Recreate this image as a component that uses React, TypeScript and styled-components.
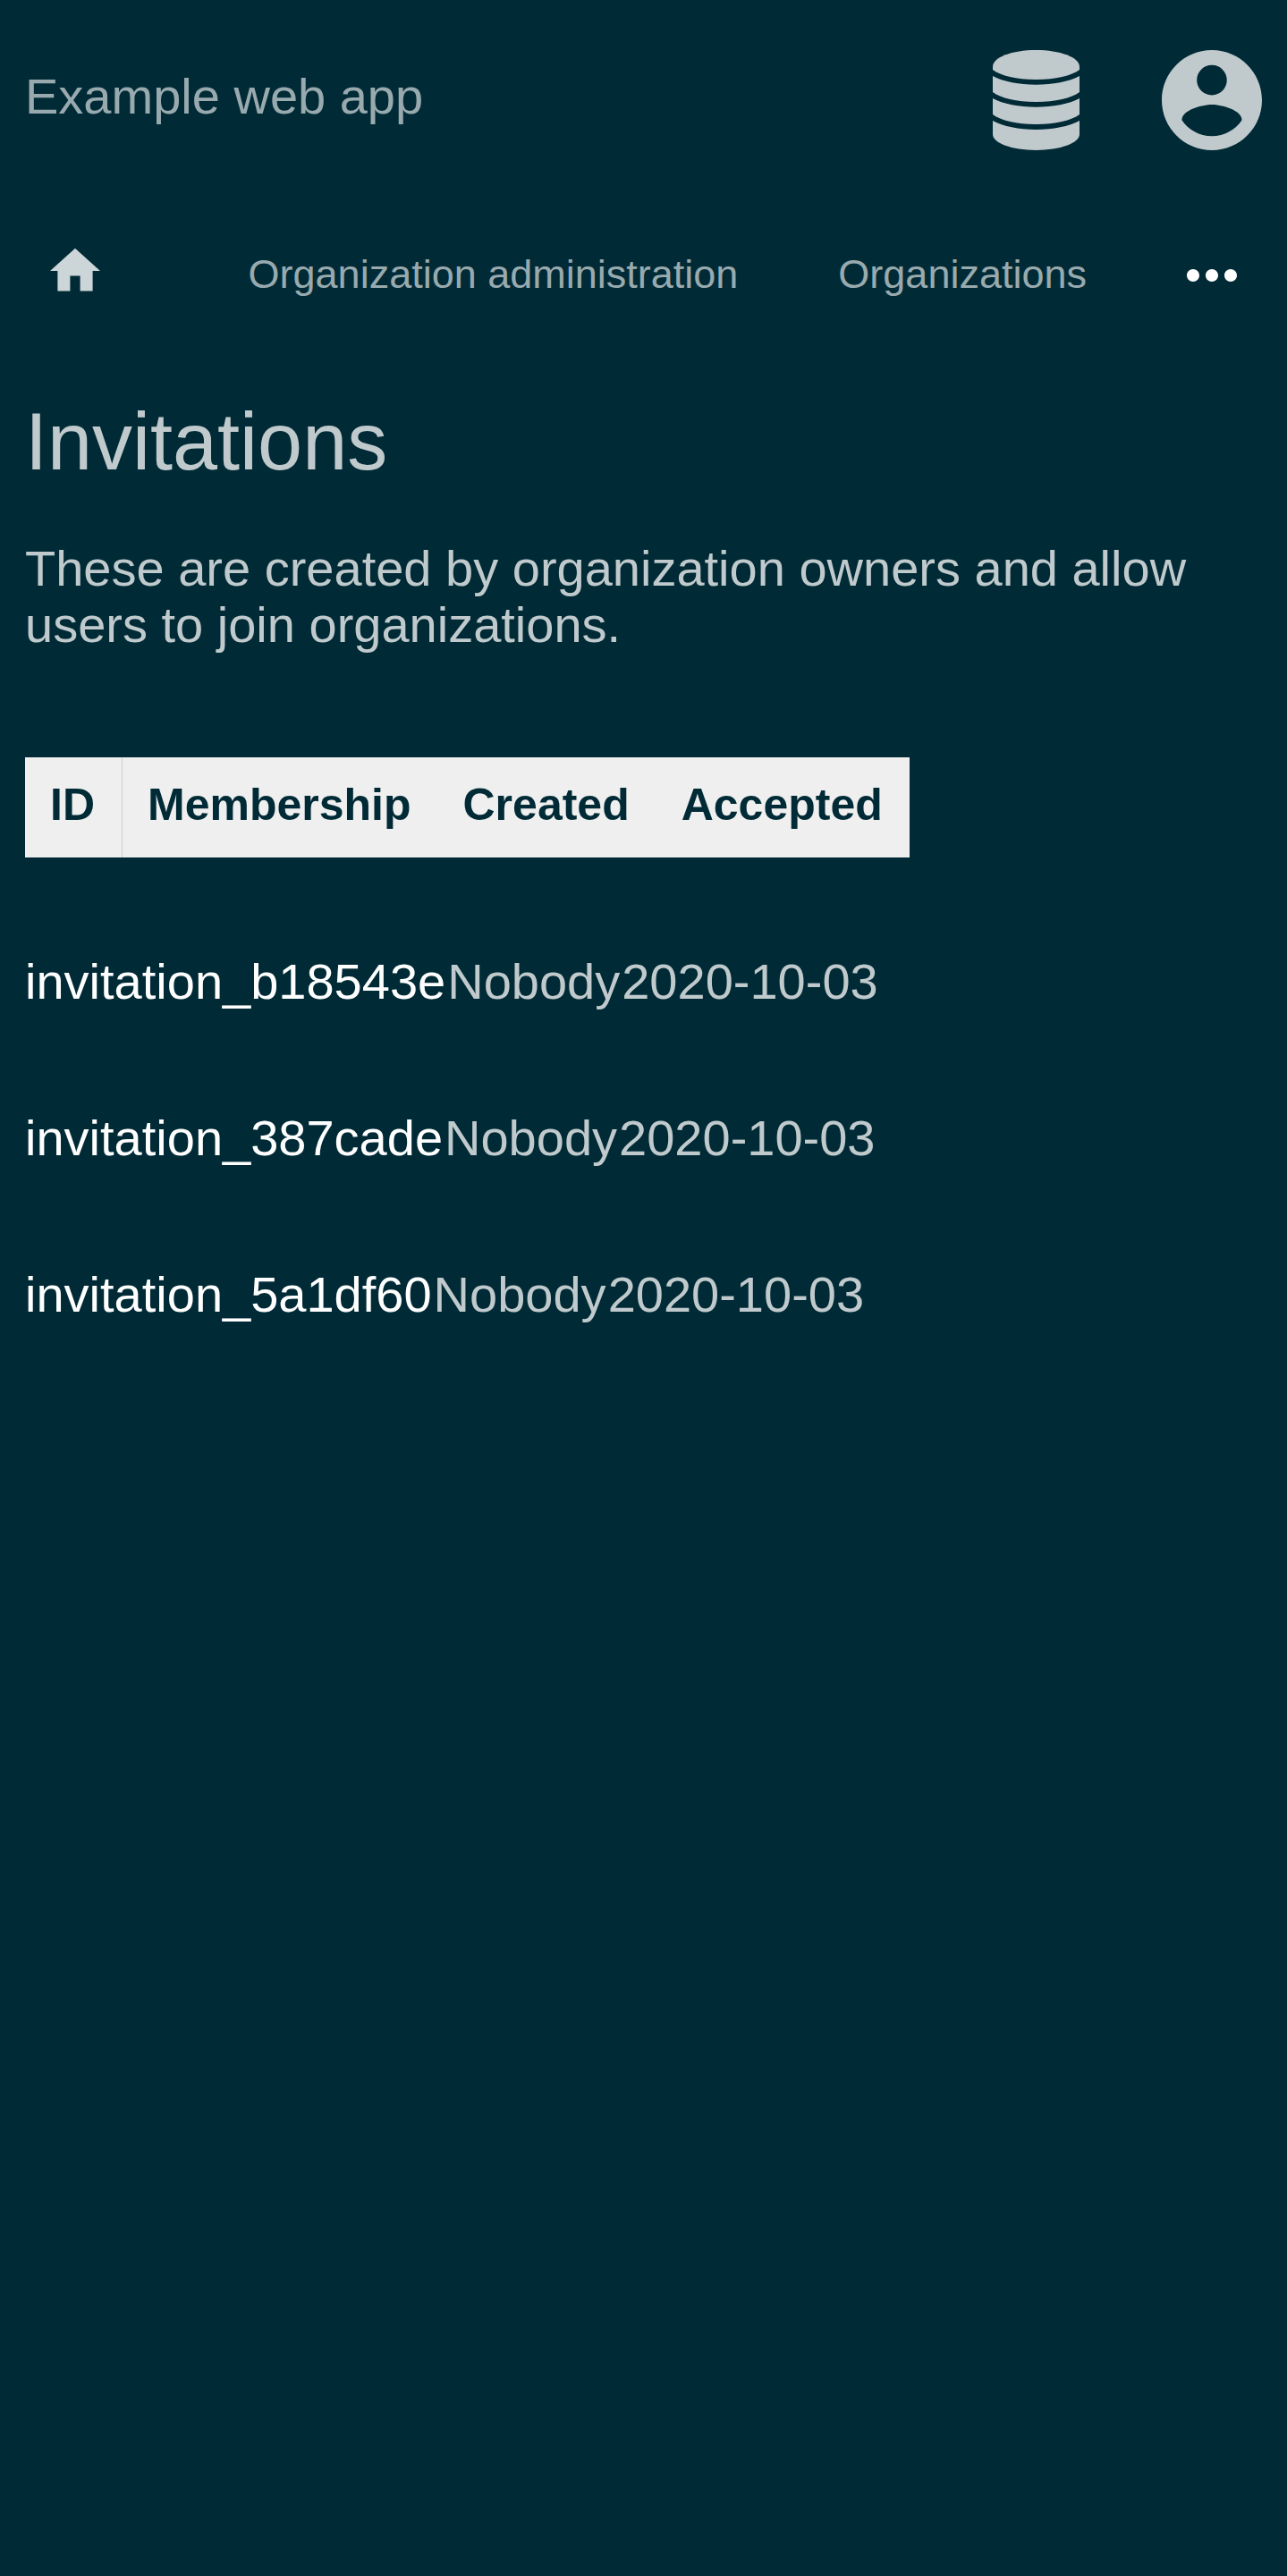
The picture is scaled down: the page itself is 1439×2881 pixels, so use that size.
import React from "react";
import styled, { createGlobalStyle } from "styled-components";

const GlobalStyle = createGlobalStyle`
  *, *::before, *::after { box-sizing: border-box; }
  html, body { margin: 0; background: #002b36; }
  body {
    color: #c0cacd;
    font-family: "Liberation Sans", Arial, sans-serif;
    font-size: 56px;
    line-height: 63px;
  }
`;

const Header = styled.header`
  display: flex;
  align-items: center;
  justify-content: space-between;
  padding: 56px 28px;
`;

const Brand = styled.a`
  color: #99aaaf;
  text-decoration: none;
  padding-bottom: 10px;
`;

const Actions = styled.div`
  display: flex;
  gap: 92px;
`;

const IconLink = styled.a`
  display: block;
  color: #c0cacd;
  line-height: 0;
`;

const HomeLink = styled(IconLink)`
  margin-right: auto;
  color: #ccd5d7;
`;

const Icon = styled.svg`
  display: block;
  fill: currentColor;
`;

const Nav = styled.nav`
  display: flex;
  align-items: flex-start;
  gap: 112px;
  padding: 51px 56px 38px;
`;

const NavLink = styled.a`
  color: #99aaaf;
  font-size: 45px;
  line-height: 63px;
  text-decoration: none;
`;

const MenuButton = styled.button`
  display: block;
  padding: 26px 0;
  border: 0;
  background: none;
  color: #fff;
`;

const Main = styled.main`
  padding: 0 28px;
`;

const Title = styled.h1`
  margin: 63px 0 58px;
  font-size: 90px;
  font-weight: 400;
  line-height: 104px;
`;

const Intro = styled.p`
  margin: 0 0 117px;
`;

const Table = styled.table`
  display: block;
  border-spacing: 0;
`;

const Head = styled.thead`
  display: flex;
`;

const HeadRow = styled.tr`
  display: flex;
  background: #efefef;
  color: #002b36;
`;

const HeadCell = styled.th`
  padding: 25px 30px 31px 28px;
  border-right: ${(p: { $divided?: boolean }) => (p.$divided ? "1px solid #ccd0d2" : "0")};
  font-size: 50px;
  font-weight: 700;
  line-height: 56px;
`;

const Body = styled.tbody`
  display: block;
  padding-top: 51px;
`;

const Row = styled.tr`
  display: flex;
  padding: 56px 0;
`;

const Cell = styled.td`
  padding: 0 2px 0 0;
`;

const InvitationLink = styled.a`
  color: #fff;
  text-decoration: none;
`;

const invitations = [
  { id: "invitation_b18543e", membership: "Nobody", created: "2020-10-03" },
  { id: "invitation_387cade", membership: "Nobody", created: "2020-10-03" },
  { id: "invitation_5a1df60", membership: "Nobody", created: "2020-10-03" },
];

export default function App() {
  return (
    <>
      <GlobalStyle />
      <Header>
        <Brand href="#">Example web app</Brand>
        <Actions>
          <IconLink href="#" aria-label="Administration">
            <Icon width="97" height="112" viewBox="0 0 291 336">
              <path d="M0 56C0 24 65 0 145 0S291 24 291 56V66C264 86 210 99 145 99S27 86 0 66Z" />
              <path d="M0 87C35 106 88 116 145 116S256 106 291 87V141C264 161 210 174 145 174S27 161 0 141Z" />
              <path d="M0 162C35 181 88 191 145 191S256 181 291 162V216C264 236 210 249 145 249S27 236 0 216Z" />
              <path d="M0 237C35 256 88 267 145 267S256 256 291 237V283C291 312 226 336 145 336S0 312 0 283Z" />
            </Icon>
          </IconLink>
          <IconLink href="#" aria-label="Account">
            <Icon width="112" height="112" viewBox="2 2 20 20">
              <path d="M12 2C6.48 2 2 6.48 2 12s4.48 10 10 10 10-4.48 10-10S17.52 2 12 2zm0 3c1.66 0 3 1.34 3 3s-1.34 3-3 3-3-1.34-3-3 1.34-3 3-3zm0 14.2c-2.5 0-4.71-1.28-6-3.22.03-1.99 4-3.08 6-3.08 1.99 0 5.97 1.09 6 3.08-1.29 1.94-3.5 3.22-6 3.22z" />
            </Icon>
          </IconLink>
        </Actions>
      </Header>
      <Nav aria-label="Main">
        <HomeLink href="#" aria-label="Home">
          <Icon width="56" height="56" viewBox="2 2 20 20">
            <path d="M10 20v-6h4v6h5v-8h3L12 3 2 12h3v8z" />
          </Icon>
        </HomeLink>
        <NavLink href="#">Organization administration</NavLink>
        <NavLink href="#">Organizations</NavLink>
        <MenuButton type="button" aria-label="More">
          <Icon width="56" height="14" viewBox="4 10 16 4">
            <path d="M6 10c-1.1 0-2 .9-2 2s.9 2 2 2 2-.9 2-2-.9-2-2-2zm12 0c-1.1 0-2 .9-2 2s.9 2 2 2 2-.9 2-2-.9-2-2-2zm-6 0c-1.1 0-2 .9-2 2s.9 2 2 2 2-.9 2-2-.9-2-2-2z" />
          </Icon>
        </MenuButton>
      </Nav>
      <Main>
        <Title>Invitations</Title>
        <Intro>These are created by organization owners and allow users to join organizations.</Intro>
        <Table>
          <Head>
            <HeadRow>
              <HeadCell scope="col" $divided>ID</HeadCell>
              <HeadCell scope="col">Membership</HeadCell>
              <HeadCell scope="col">Created</HeadCell>
              <HeadCell scope="col">Accepted</HeadCell>
            </HeadRow>
          </Head>
          <Body>
            {invitations.map((item) => (
              <Row key={item.id}>
                <Cell>
                  <InvitationLink href="#">{item.id}</InvitationLink>
                </Cell>
                <Cell>{item.membership}</Cell>
                <Cell>{item.created}</Cell>
              </Row>
            ))}
          </Body>
        </Table>
      </Main>
    </>
  );
}
